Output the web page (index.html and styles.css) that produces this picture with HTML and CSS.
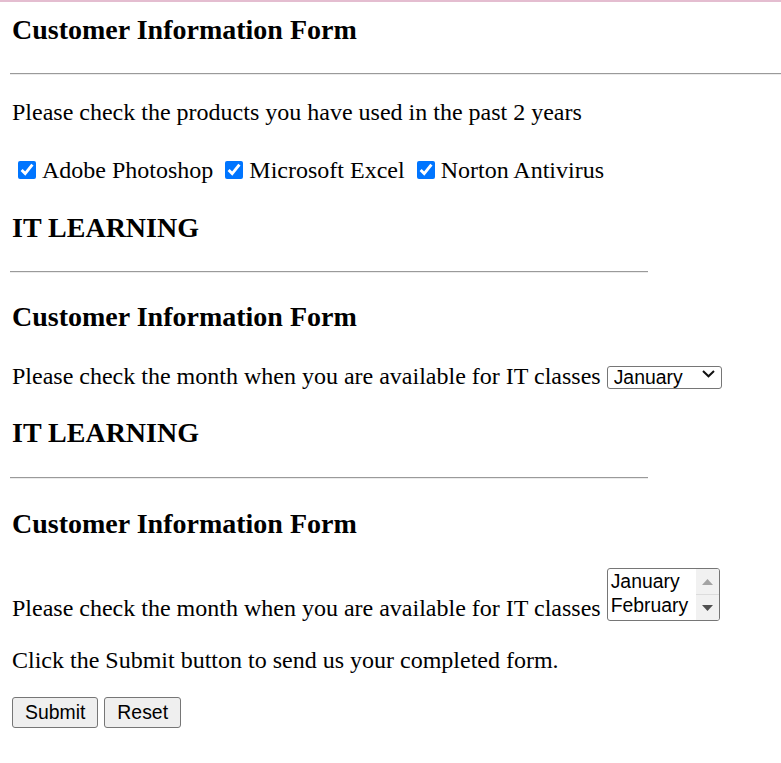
FILE: index.html
```html
<!DOCTYPE html>
<html lang="en">
<head>
<meta charset="utf-8">
<title>Customer Information Form</title>
<link rel="stylesheet" href="styles.css">
</head>
<body>
<div class="topbar"></div>
<main class="page">
  <h2 class="title title-first">Customer Information Form</h2>
  <hr class="rule">
  <p class="text text-intro">Please check the products you have used in the past 2 years</p>
  <p class="text checks">
    <label class="check"><input type="checkbox" checked>Adobe Photoshop</label>
    <label class="check"><input type="checkbox" checked>Microsoft Excel</label>
    <label class="check"><input type="checkbox" checked>Norton Antivirus</label>
  </p>

  <h2 class="title">IT LEARNING</h2>
  <hr class="rule rule-short">
  <h2 class="title">Customer Information Form</h2>
  <p class="text row-select">Please check the month when you are available for IT classes <span class="select-wrap"><select class="dropdown"><option>January</option><option>February</option><option>March</option><option>April</option></select><svg class="chevron" width="13" height="8" viewBox="0 0 13 8"><polyline points="1,1 6.5,6.3 12,1" fill="none" stroke="#111" stroke-width="2"/></svg></span></p>

  <h2 class="title title-tight">IT LEARNING</h2>
  <hr class="rule rule-short rule-loose">
  <h2 class="title title-loose">Customer Information Form</h2>
  <p class="text row-list">Please check the month when you are available for IT classes <span class="listbox" role="listbox"><span class="listbox-inner"><span class="options"><span class="option">January</span><span class="option">February</span></span><span class="scrollbar"><span class="sb-btn"><svg width="11" height="6" viewBox="0 0 11 6"><polygon points="5.5,0 11,6 0,6" fill="#a3a3a3"/></svg></span><span class="sb-btn sb-down"><svg width="11" height="6" viewBox="0 0 11 6"><polygon points="0,0 11,0 5.5,6" fill="#505050"/></svg></span></span></span></span></p>
  <p class="text row-click">Click the Submit button to send us your completed form.</p>
  <div class="actions">
    <button type="submit" class="btn">Submit</button>
    <button type="reset" class="btn">Reset</button>
  </div>
</main>
</body>
</html>
```
FILE: styles.css
```css
html, body {
  margin: 0;
  padding: 0;
  background: #ffffff;
  color: #000000;
}

.topbar {
  height: 2px;
  background: #e4bdd0;
}

.page {
  padding: 0 0 40px 12px;
  font-family: "Liberation Serif", "Times New Roman", serif;
}

.title {
  font-family: "Liberation Serif", "Times New Roman", serif;
  font-size: 28px;
  line-height: 32px;
  font-weight: 700;
  margin: 28px 0 0;
}

.title-first {
  margin-top: 12px;
}

.title-tight {
  margin-top: 27px;
}

.title-loose {
  margin-top: 29px;
}

.rule {
  display: block;
  height: 0;
  margin: 27px 0 0 -2px;
  border: 0;
  border-top: 1px solid #9a9a9a;
  border-bottom: 1px solid #ececec;
}

.rule-short {
  width: 638px;
}

.rule-loose {
  margin-top: 28px;
}

.text {
  font-size: 24px;
  line-height: 28px;
  margin: 28px 0 0;
}

.text-intro {
  margin-top: 23px;
}

.checks {
  margin-top: 30px;
}

.check input {
  width: 18px;
  height: 18px;
  margin: 0 6px 0 6px;
  vertical-align: -1px;
}

.row-select {
  margin-top: 29px;
}

.row-click {
  margin-top: 24px;
}

.select-wrap {
  position: relative;
  display: inline-block;
}

.dropdown {
  appearance: none;
  -webkit-appearance: none;
  width: 115px;
  height: 23px;
  box-sizing: border-box;
  margin: 0;
  padding: 0 0 0 6px;
  border: 1px solid #767676;
  border-radius: 3px;
  background: #ffffff;
  color: #000000;
  font-family: "Liberation Sans", Arial, sans-serif;
  font-size: 19.4px;
  line-height: 21px;
}

.chevron {
  position: absolute;
  right: 7px;
  top: 8px;
  pointer-events: none;
}

.listbox {
  display: inline-block;
  overflow: hidden;
  vertical-align: -5px;
  width: 113px;
  height: 53px;
  box-sizing: border-box;
  border: 1px solid #767676;
  border-radius: 3px;
  background: #ffffff;
}

.listbox-inner {
  display: flex;
  height: 100%;
}

.options {
  flex: 1;
  display: flex;
  flex-direction: column;
  font-family: "Liberation Sans", Arial, sans-serif;
  font-size: 19.4px;
  line-height: 24px;
  padding-left: 3px;
  white-space: nowrap;
  overflow: hidden;
}

.scrollbar {
  width: 23px;
  display: flex;
  flex-direction: column;
  background: #f1f1f1;
}

.sb-btn {
  flex: 1;
  display: flex;
  align-items: center;
  justify-content: center;
}

.sb-down {
  border-top: 1px solid #dcdcdc;
}

.actions {
  display: flex;
  gap: 6px;
  margin-top: 23px;
}

.btn {
  height: 31px;
  box-sizing: border-box;
  margin: 0;
  padding: 0 12px;
  border: 1px solid #767676;
  border-radius: 3px;
  background: #efefef;
  color: #000000;
  font-family: "Liberation Sans", Arial, sans-serif;
  font-size: 19.4px;
  line-height: 29px;
}
```
